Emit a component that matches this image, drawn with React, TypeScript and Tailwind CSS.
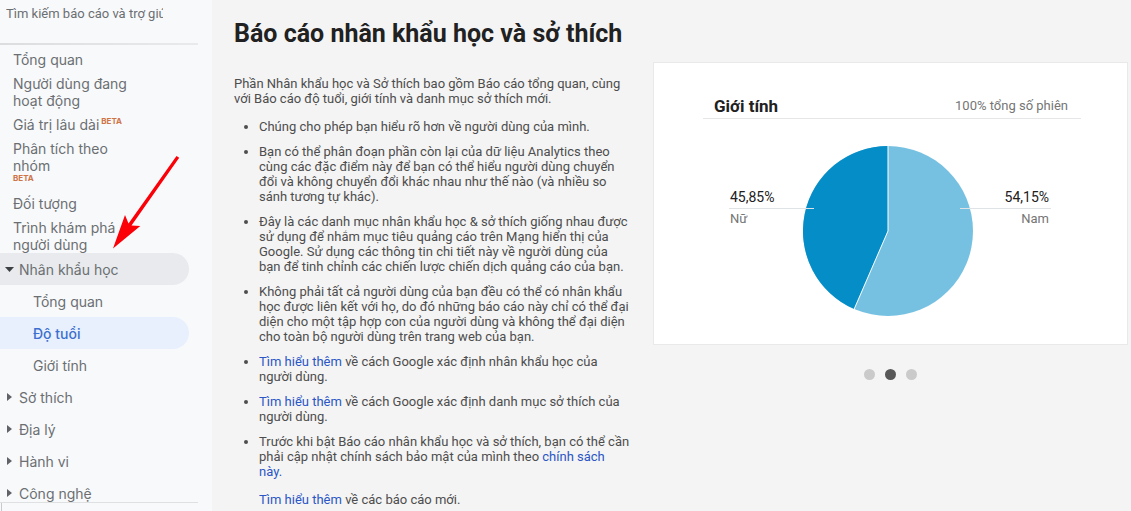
import React from "react";

const reports: { label: string; beta?: "inline" | "below" }[] = [
  { label: "Tổng quan" },
  { label: "Người dùng đang hoạt động" },
  { label: "Giá trị lâu dài", beta: "inline" },
  { label: "Phân tích theo nhóm", beta: "below" },
  { label: "Đối tượng" },
  { label: "Trình khám phá người dùng" },
];

const demographics = ["Tổng quan", "Độ tuổi", "Giới tính"];
const groups = ["Sở thích", "Địa lý", "Hành vi", "Công nghệ"];

function Sidebar() {
  return (
    <aside className="relative flex w-[212px] shrink-0 flex-col bg-[#f8f9fb] text-[#6b6f72]">
      <div className="flex h-[43px] shrink-0 items-start pt-[5px] pl-[6px]">
        <input
          type="text"
          aria-label="Tìm kiếm báo cáo và trợ giúp"
          defaultValue="Tìm kiếm báo cáo và trợ giúp"
          className="w-[157px] bg-transparent font-[Roboto,sans-serif] text-[13px] leading-[18px] outline-none"
        />
      </div>
      <div className="mr-[14px] h-[2px] shrink-0 bg-linear-to-r from-[#dcdddf] to-[#e9eaec]" />
      <nav className="min-h-0 flex-1 overflow-hidden pt-[6px] text-[14px] leading-[17px]">
        <ul className="flex w-[136px] flex-col gap-[7px] pl-[13px]">
          {reports.map((r) => (
            <li key={r.label}>
              <a href="#" className="block">
                {r.label}
                {r.beta === "inline" && (
                  <sup className="relative -top-[6px] ml-[2px] align-baseline text-[8px] leading-none font-bold text-[#cf7446]">BETA</sup>
                )}
                {r.beta === "below" && (
                  <span className="block h-[14px] text-[8px] leading-[9px] font-bold text-[#cf7446]">BETA</span>
                )}
              </a>
            </li>
          ))}
        </ul>
        <button type="button" aria-expanded="true" className="flex h-8 w-[189px] items-center gap-[5px] rounded-r-full bg-[#e8eaed] pl-[5px]">
          <svg width="9" height="5" viewBox="0 0 9 5" aria-hidden="true">
            <path d="M0 0h9L4.500 5z" fill="#3c4043" />
          </svg>
          Nhân khẩu học
        </button>
        <ul>
          {demographics.map((label) => (
            <li key={label}>
              <a
                href="#"
                className={
                  label === "Độ tuổi"
                    ? "flex h-8 w-[189px] items-center rounded-r-full bg-[#e8f0fe] pl-[33px] font-medium text-[#3c6fcf]"
                    : "flex h-8 w-[189px] items-center pl-[33px]"
                }
              >
                {label}
              </a>
            </li>
          ))}
        </ul>
        {groups.map((label) => (
          <button key={label} type="button" aria-expanded="false" className="flex h-8 w-[189px] items-center gap-[7px] pl-[7px]">
            <svg width="5" height="8" viewBox="0 0 5 8" aria-hidden="true">
              <path d="M0 0v8l5-4z" fill="#5f6368" />
            </svg>
            {label}
          </button>
        ))}
      </nav>
      <div className="mr-[14px] h-[9px] shrink-0 border-t border-[#dfe0e2]">
        <div className="ml-px h-full border-l border-[#c8c9cb]" />
      </div>
      <svg className="pointer-events-none absolute top-[154px] left-[110px]" width="72" height="98" viewBox="110 154 72 98" aria-hidden="true">
        <path d="M113 248.500L125 215L128.500 223.500L176.500 156L179.200 157.800L131.500 225.500L140.300 226Z" fill="#fb0007" />
      </svg>
    </aside>
  );
}

function Learn({ children }: { children: React.ReactNode }) {
  return (
    <a href="#" className="text-[#2a56c6]">
      {children}
    </a>
  );
}

function GenderCard() {
  return (
    <section className="border border-[#e9e9e9] bg-white pt-[31px] pr-[46px] pb-[28px] pl-[49px]">
      <header className="flex items-center justify-between border-b border-[#e4e6e8] pr-[13px] pl-[11px]">
        <h2 className="text-[17px] leading-6 font-bold text-[#212121]">Giới tính</h2>
        <span className="text-[13px] leading-6 text-[#757575]">100% tổng số phiên</span>
      </header>
      <div className="relative mt-[27px] mr-[9px] flex justify-center">
        <svg width="170" height="170" viewBox="0 0 170 170" role="img" aria-label="Nữ 45,85%, Nam 54,15%">
          <circle cx="85" cy="85" r="85" fill="#76c1e1" />
          <path d="M85 85V0A85 85 0 0 0 51.200 163Z" fill="#058dc7" />
          <path d="M85 0V85L51.200 163" fill="none" stroke="#fff" strokeWidth="1" />
        </svg>
        <dl className="absolute top-[41px] left-[26px] flex w-[85px] flex-col">
          <dd className="border-b border-[#dfe3e6] pl-px text-[14px] leading-[21px] text-[#212121]">45,85%</dd>
          <dt className="pl-px text-[13px] leading-5 text-[#757575]">Nữ</dt>
        </dl>
        <dl className="absolute top-[41px] right-[21px] flex w-[91px] flex-col text-right">
          <dd className="border-b border-[#dfe3e6] pr-[2px] text-[14px] leading-[21px] text-[#212121]">54,15%</dd>
          <dt className="pr-[2px] text-[13px] leading-5 text-[#757575]">Nam</dt>
        </dl>
      </div>
    </section>
  );
}

export default function App() {
  return (
    <div className="flex h-screen overflow-hidden bg-[#f4f4f4] font-[Inter,sans-serif]">
      <Sidebar />
      <main className="min-w-0 flex-1 pt-[18px] pr-[3px] pl-[22px] font-[Roboto,sans-serif]">
        <h1 className="text-[25px] leading-8 font-bold text-[#212121]">Báo cáo nhân khẩu học và sở thích</h1>
        <div className="flex gap-[22px] pt-[12px]">
          <div className="w-[397px] shrink-0 pt-[14px] text-[13px] leading-[15px] text-[#4d4d4d]">
            <p>Phần Nhân khẩu học và Sở thích bao gồm Báo cáo tổng quan, cùng với Báo cáo độ tuổi, giới tính và danh mục sở thích mới.</p>
            <ul className="mt-[13px] flex list-disc flex-col gap-[10px] pl-[25px]">
              <li>Chúng cho phép bạn hiểu rõ hơn về người dùng của mình.</li>
              <li>Bạn có thể phân đoạn phần còn lại của dữ liệu Analytics theo cùng các đặc điểm này để bạn có thể hiểu người dùng chuyển đổi và không chuyển đổi khác nhau như thế nào (và nhiều so sánh tương tự khác).</li>
              <li>Đây là các danh mục nhân khẩu học &amp; sở thích giống nhau được sử dụng để nhắm mục tiêu quảng cáo trên Mạng hiển thị của Google. Sử dụng các thông tin chi tiết này về người dùng của bạn để tinh chỉnh các chiến lược chiến dịch quảng cáo của bạn.</li>
              <li>Không phải tất cả người dùng của bạn đều có thể có nhân khẩu học được liên kết với họ, do đó những báo cáo này chỉ có thể đại diện cho một tập hợp con của người dùng và không thể đại diện cho toàn bộ người dùng trên trang web của bạn.</li>
              <li><Learn>Tìm hiểu thêm</Learn> về cách Google xác định nhân khẩu học của người dùng.</li>
              <li><Learn>Tìm hiểu thêm</Learn> về cách Google xác định danh mục sở thích của người dùng.</li>
              <li>
                Trước khi bật Báo cáo nhân khẩu học và sở thích, bạn có thể cần phải cập nhật chính sách bảo mật của mình theo <Learn>chính sách<br />này.</Learn>
                <p className="mt-[13px]"><Learn>Tìm hiểu thêm</Learn> về các báo cáo mới.</p>
              </li>
            </ul>
          </div>
          <div className="min-w-0 flex-1">
            <GenderCard />
            <div className="mt-[24px] flex justify-center gap-[10px]">
              <button type="button" aria-label="Trang 1" className="size-[11px] rounded-full bg-[#cacaca]" />
              <button type="button" aria-label="Trang 2" className="size-[11px] rounded-full bg-[#585858]" />
              <button type="button" aria-label="Trang 3" className="size-[11px] rounded-full bg-[#cacaca]" />
            </div>
          </div>
        </div>
      </main>
    </div>
  );
}
